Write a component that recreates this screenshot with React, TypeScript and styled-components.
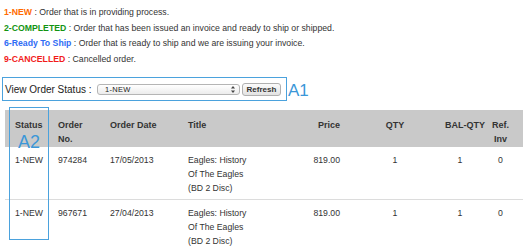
import React from 'react';
import styled, { createGlobalStyle } from 'styled-components';

const GlobalStyle = createGlobalStyle`
  html, body {
    margin: 0;
    padding: 0;
    background: #ffffff;
  }
  body {
    font-family: "Liberation Sans", Arial, sans-serif;
    color: #333333;
  }
`;

const Page = styled.div`
  width: 530px;
  height: 247px;
  overflow: hidden;
  padding-top: 5px;
  box-sizing: border-box;
`;

const Legend = styled.div`
  padding-left: 4px;
  font-size: 8.7px;
  line-height: 15.5px;
`;

const LegendLine = styled.div``;

const StatusName = styled.span<{ $color: string }>`
  color: ${props => props.$color};
  font-weight: bold;
`;

const FilterRow = styled.div`
  display: flex;
  align-items: center;
  margin-top: 9.5px;
`;

const FilterBox = styled.div`
  display: flex;
  align-items: center;
  width: 285px;
  height: 24px;
  box-sizing: border-box;
  margin-left: 2px;
  padding: 1px 0 0 2px;
  border: 1px solid #4ba2dd;
`;

const FilterLabel = styled.span`
  font-size: 10px;
  color: #222;
  width: 92px;
`;

const SelectBox = styled.div`
  display: flex;
  align-items: center;
  justify-content: space-between;
  width: 143px;
  height: 11px;
  box-sizing: border-box;
  padding: 0 4px 0 7px;
  border: 1px solid #b5b5b5;
  border-radius: 3px;
  background: linear-gradient(#ffffff, #ececec);
  font-size: 7.5px;
  letter-spacing: 0.3px;
  color: #222;
`;

const RefreshButton = styled.button`
  margin-left: 2px;
  height: 13px;
  width: 39px;
  padding: 0;
  border: 1px solid #b0b0b0;
  border-radius: 3px;
  background: linear-gradient(#fbfbfb, #e2e2e2);
  font-family: "Liberation Sans", Arial, sans-serif;
  font-size: 8px;
  font-weight: bold;
  color: #333;
  line-height: 11px;
`;

const Callout = styled.span<{ $size: number }>`
  color: #3b97d8;
  font-family: "Liberation Sans", Arial, sans-serif;
  font-size: ${props => props.$size}px;
  line-height: 1;
`;

const A1Label = styled(Callout)`
  margin-left: 1px;
  margin-top: 3px;
`;

const TableWrap = styled.div`
  position: relative;
  margin: 9px 0 0 5px;
  width: 518px;
`;

const OrderTable = styled.table`
  width: 518px;
  border-collapse: collapse;
  table-layout: fixed;
  font-size: 8.7px;
  line-height: 14px;
  color: #333;
`;

const HeadCell = styled.th<{ $align?: string; $w: number; $pr?: number; $pl?: number }>`
  width: ${props => props.$w}px;
  background: #c9c9c9;
  text-align: ${props => props.$align || 'left'};
  vertical-align: top;
  font-size: 9px;
  font-weight: bold;
  color: #333;
  padding: 8px ${props => props.$pr ?? 6}px 1px ${props => props.$pl ?? 10}px;
  box-sizing: border-box;
  height: 36px;
`;

const Row = styled.tr`
  & + & td {
    border-top: 1px solid #dcdcdc;
  }
`;

const Cell = styled.td<{ $align?: string; $pr?: number; $pl?: number; $nowrap?: boolean }>`
  text-align: ${props => props.$align || 'left'};
  vertical-align: top;
  white-space: ${props => (props.$nowrap ? 'nowrap' : 'normal')};
  padding: 6px ${props => props.$pr ?? 6}px 3px ${props => props.$pl ?? 10}px;
  height: 43px;
`;

const A2Box = styled.div`
  position: absolute;
  left: 4px;
  top: -3px;
  width: 40px;
  height: 133px;
  box-sizing: border-box;
  border: 1px solid #4ba2dd;
  display: flex;
  justify-content: center;
  padding-top: 25px;
  pointer-events: none;
`;

const SelectArrows = () => (
  <svg width="4" height="7" viewBox="0 0 4 7">
    <path d="M2 0 L4 2.5 L0 2.5 Z" fill="#444" />
    <path d="M0 4.5 L4 4.5 L2 7 Z" fill="#444" />
  </svg>
);

const orders = [
  { status: '1-NEW', no: '974284', date: '17/05/2013', title: 'Eagles: History Of The Eagles (BD 2 Disc)', price: '819.00', qty: 1, bal: 1, inv: 0 },
  { status: '1-NEW', no: '967671', date: '27/04/2013', title: 'Eagles: History Of The Eagles (BD 2 Disc)', price: '819.00', qty: 1, bal: 1, inv: 0 },
];

const App: React.FC = () => {
  return (
    <Page>
      <GlobalStyle />
      <Legend>
        <LegendLine>
          <StatusName $color="#ff6a00">1-NEW</StatusName> : Order that is in providing process.
        </LegendLine>
        <LegendLine>
          <StatusName $color="#129412">2-COMPLETED</StatusName> : Order that has been issued an invoice and ready to ship or shipped.
        </LegendLine>
        <LegendLine>
          <StatusName $color="#2f6cf5">6-Ready To Ship</StatusName> : Order that is ready to ship and we are issuing your invoice.
        </LegendLine>
        <LegendLine>
          <StatusName $color="#f21b1b">9-CANCELLED</StatusName> : Cancelled order.
        </LegendLine>
      </Legend>

      <FilterRow>
        <FilterBox>
          <FilterLabel>View Order Status :</FilterLabel>
          <SelectBox>
            <span>1-NEW</span>
            <SelectArrows />
          </SelectBox>
          <RefreshButton>Refresh</RefreshButton>
        </FilterBox>
        <A1Label $size={17}>A1</A1Label>
      </FilterRow>

      <TableWrap>
        <OrderTable>
          <thead>
            <tr>
              <HeadCell $w={43} $pr={2}>Status</HeadCell>
              <HeadCell $w={52}>Order No.</HeadCell>
              <HeadCell $w={78}>Order Date</HeadCell>
              <HeadCell $w={80} $pr={8}>Title</HeadCell>
              <HeadCell $w={92} $align="right" $pr={10}>Price</HeadCell>
              <HeadCell $w={90} $align="center" $pl={0} $pr={0}>QTY</HeadCell>
              <HeadCell $w={50} $align="center" $pl={0} $pr={0}>BAL-QTY</HeadCell>
              <HeadCell $w={33} $align="center" $pl={0} $pr={12}>Ref. Inv</HeadCell>
            </tr>
          </thead>
          <tbody>
            {orders.map(o => (
              <Row key={o.no}>
                <Cell $pr={2} $nowrap>{o.status}</Cell>
                <Cell>{o.no}</Cell>
                <Cell>{o.date}</Cell>
                <Cell $pr={8}>{o.title}</Cell>
                <Cell $align="right" $pr={10}>{o.price}</Cell>
                <Cell $align="center" $pl={0} $pr={0}>{o.qty}</Cell>
                <Cell $align="center" $pl={0} $pr={10}>{o.bal}</Cell>
                <Cell $align="center" $pl={0} $pr={12}>{o.inv}</Cell>
              </Row>
            ))}
          </tbody>
        </OrderTable>
        <A2Box>
          <Callout $size={18}>A2</Callout>
        </A2Box>
      </TableWrap>
    </Page>
  );
};

export default App;
